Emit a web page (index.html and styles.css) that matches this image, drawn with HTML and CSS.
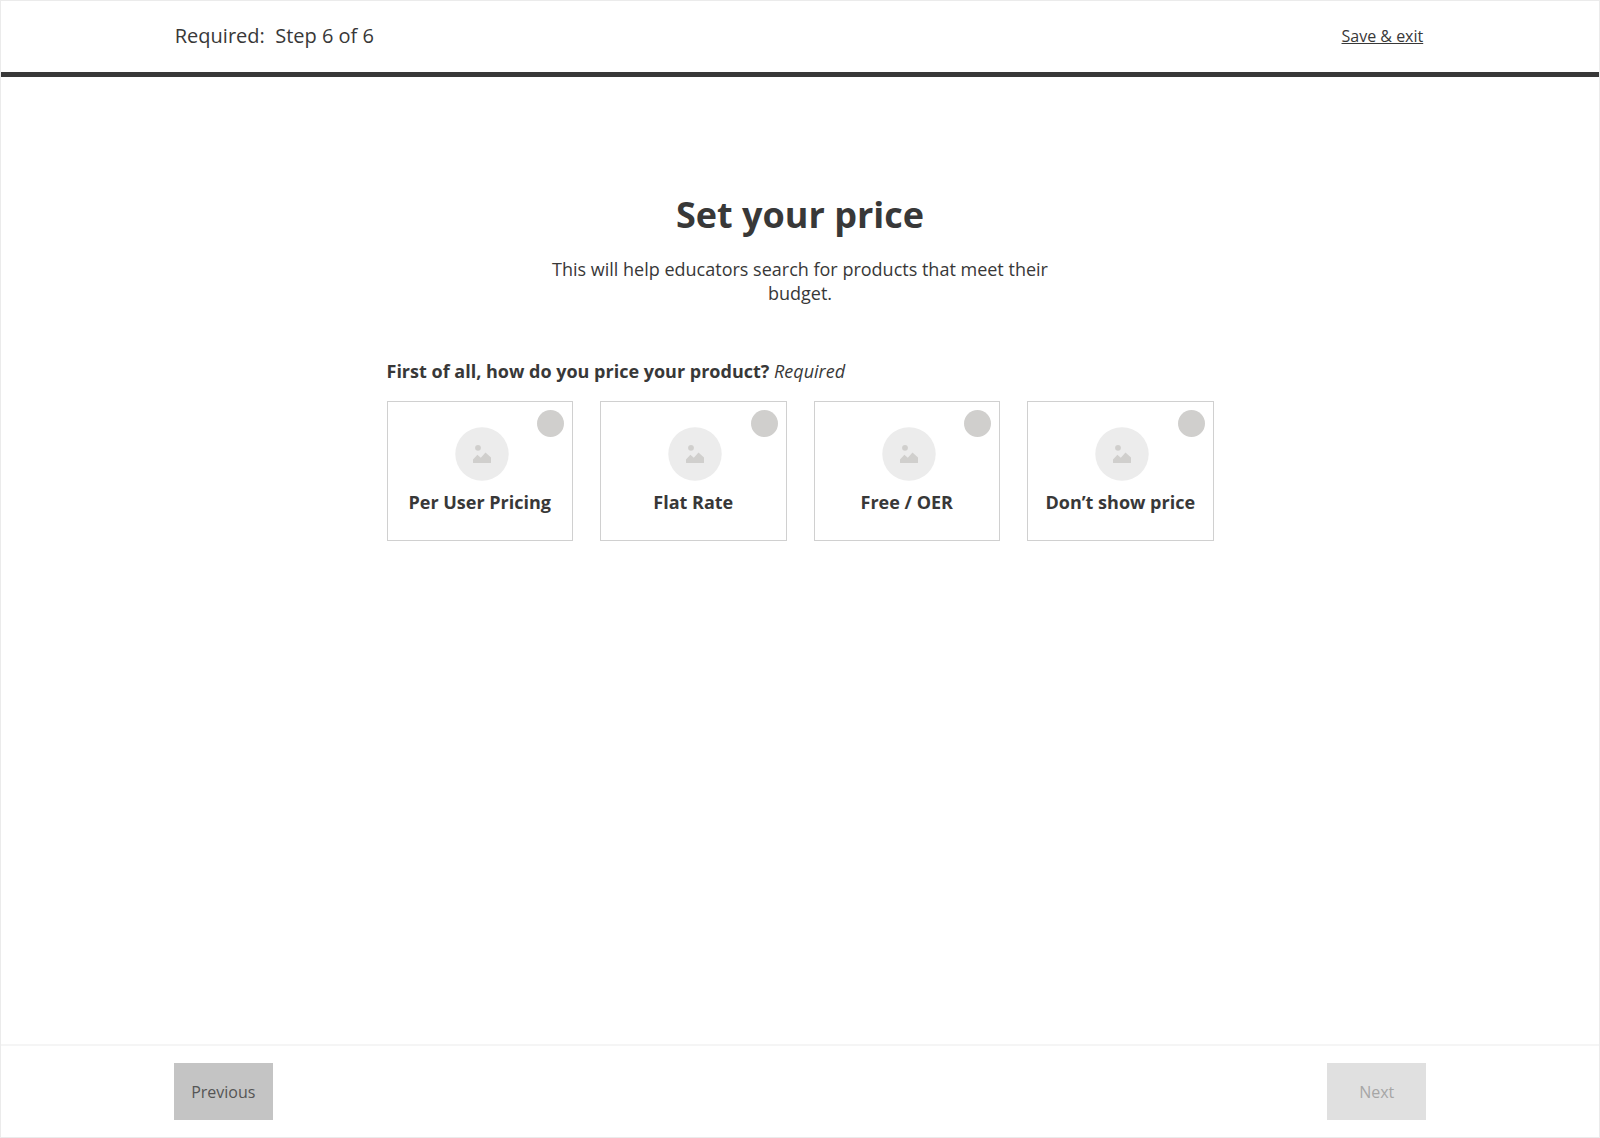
FILE: index.html
```html
<!DOCTYPE html>
<html lang="en">
<head>
<meta charset="utf-8">
<meta name="viewport" content="width=device-width, initial-scale=1">
<title>Set your price</title>
<link rel="stylesheet" href="styles.css">
</head>
<body>
<svg class="sprite" width="0" height="0" aria-hidden="true">
  <symbol id="picture" viewBox="0 0 54 54">
    <circle cx="27" cy="27" r="26.7" fill="#ececec"/>
    <circle cx="23" cy="20.8" r="2.9" fill="#d0cfcd"/>
    <path d="M18.600 36Q18 36 18 35.400V32.400L22.400 27.700L25.800 30.800L30.500 25.600L36 30.400V35.400Q36 36 35.400 36Z" fill="#d0cfcd"/>
  </symbol>
</svg>
<div class="page">
  <header class="header">
    <p class="step">Required:&nbsp; Step 6 of 6</p>
    <a class="exit" href="#">Save &amp; exit</a>
  </header>
  <main class="main">
    <h1 class="title">Set your price</h1>
    <p class="intro">This will help educators search for products that meet their budget.</p>
    <fieldset class="pricing">
      <legend class="question">First of all, how do you price your product? <em class="required">Required</em></legend>
      <div class="cards">
        <label class="card">
          <input class="radio" type="radio" name="pricing" value="user">
          <svg class="picture" aria-hidden="true"><use href="#picture"/></svg>
          <span class="name">Per User Pricing</span>
        </label>
        <label class="card">
          <input class="radio" type="radio" name="pricing" value="flat">
          <svg class="picture" aria-hidden="true"><use href="#picture"/></svg>
          <span class="name">Flat Rate</span>
        </label>
        <label class="card">
          <input class="radio" type="radio" name="pricing" value="free">
          <svg class="picture" aria-hidden="true"><use href="#picture"/></svg>
          <span class="name">Free / OER</span>
        </label>
        <label class="card">
          <input class="radio" type="radio" name="pricing" value="hidden">
          <svg class="picture" aria-hidden="true"><use href="#picture"/></svg>
          <span class="name">Don’t show price</span>
        </label>
      </div>
    </fieldset>
  </main>
  <footer class="footer">
    <button class="button" type="button">Previous</button>
    <button class="button" type="button" disabled>Next</button>
  </footer>
</div>
</body>
</html>
```
FILE: styles.css
```css
* {
  box-sizing: border-box;
}

body {
  margin: 0;
  background: #fff;
  color: #383838;
  font: 18px/24px "Open Sans", "Noto Sans", sans-serif;
}

h1,
p {
  margin: 0;
}

.sprite {
  position: absolute;
}

.page {
  display: flex;
  flex-direction: column;
  min-height: 100vh;
  border: 1px solid #ebebeb;
}

.header,
.footer {
  display: flex;
  align-items: center;
  justify-content: space-between;
}

.header {
  padding: 20px 11% 21px calc(11% - 2px);
  border-bottom: 5px solid #383838;
}

.step {
  font-size: 20px;
  line-height: 30px;
}

.exit {
  color: inherit;
  font-size: 16px;
}

.main {
  flex: 1;
  width: 100%;
  max-width: 859px;
  margin: 0 auto;
  padding: 112px 16px 40px;
}

.title {
  font-size: 36px;
  line-height: 52px;
  text-align: center;
}

.intro {
  max-width: 520px;
  margin: 16px auto 0;
  text-align: center;
}

.pricing {
  min-width: 0;
  margin: 54px 0 0;
  padding: 0;
  border: 0;
}

.question {
  padding: 0;
  font-weight: 700;
}

.required {
  font-weight: 400;
}

.cards {
  display: grid;
  grid-template-columns: repeat(auto-fit, minmax(180px, 1fr));
  gap: 27px;
  margin-top: 18px;
}

.card {
  position: relative;
  display: flex;
  flex-direction: column;
  align-items: center;
  gap: 9px;
  padding: 25px 8px 26px;
  border: 1px solid #d0d0d0;
  cursor: pointer;
}

.radio {
  position: absolute;
  top: 8px;
  right: 8px;
  width: 27px;
  height: 27px;
  margin: 0;
  border-radius: 50%;
  background: #d0cfcd;
  appearance: none;
}

.radio:checked {
  background: #383838;
}

.picture {
  width: 54px;
  height: 54px;
  margin-left: 4px;
}

.name {
  font-weight: 700;
}

.footer {
  padding: 17px calc(11% - 3px);
  border-top: 2px solid #f5f5f5;
}

.button {
  width: 99px;
  height: 57px;
  border: 0;
  background: #c4c4c4;
  color: #555;
  font: inherit;
  font-size: 16px;
}

.button:disabled {
  background: #e0e0e0;
  color: #a6a6a6;
}
```
